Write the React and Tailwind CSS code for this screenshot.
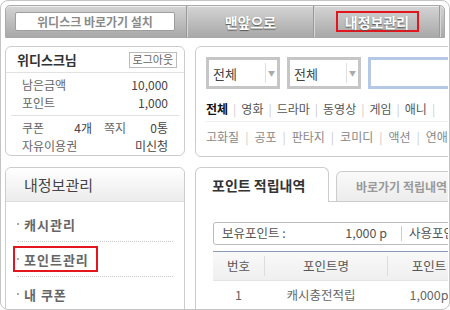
const font = { fontFamily: '"Noto Sans CJK KR", "Noto Sans", sans-serif' };

function Sep() {
  return (
    <div className="flex h-full">
      <div className="w-px h-full bg-[#9a9a9a]" />
      <div className="w-px h-full bg-[#d6d6d6]" />
    </div>
  );
}

function TopBar() {
  return (
    <div className="h-[33px] shrink-0 flex items-center rounded-t-[5px] border border-[#a9a9a9] bg-gradient-to-b from-[#d4d4d4] to-[#a9a9a9] shadow-[inset_0_1px_0_#eeeeee]">
      <div className="w-[180px] h-full flex items-center pl-[9px]">
        <div className="w-[160px] h-[19px] bg-white border border-[#9e9e9e] rounded-[2px] flex items-center justify-center text-[12px] font-bold text-[#8a8a8a] leading-none">
          위디스크 바로가기 설치
        </div>
      </div>
      <Sep />
      <div className="w-[125px] h-full flex items-center justify-center text-[14px] font-bold text-white leading-none [text-shadow:0_1px_1px_#555]">
        맨앞으로
      </div>
      <Sep />
      <div className="w-[124px] h-full flex items-center justify-center">
        <div className="w-[83px] h-[21px] border-2 border-[#e3161e] flex items-center justify-center text-[14px] font-bold text-white leading-none [text-shadow:0_1px_1px_#555]">
          내정보관리
        </div>
      </div>
      <Sep />
    </div>
  );
}

function UserBox() {
  return (
    <div className="h-[111px] border border-[#cccccc] rounded-[6px] flex flex-col text-[12px] leading-none">
      <div className="h-[26px] flex items-center justify-between pl-[11px] pr-[7px] border-b border-[#e2e2e2]">
        <span className="text-[13px] font-bold text-[#333]">위디스크님</span>
        <span className="h-[16px] px-[3px] border border-[#bbbbbb] text-[11px] text-[#666] flex items-center">로그아웃</span>
      </div>
      <div className="flex flex-col px-[16px] pr-[16px] pt-[3px]">
        <div className="h-[18px] flex items-center justify-between text-[#666]">
          <span>남은금액</span>
          <span className="text-[#444]">10,000</span>
        </div>
        <div className="h-[18px] flex items-center justify-between text-[#666]">
          <span>포인트</span>
          <span className="text-[#444]">1,000</span>
        </div>
      </div>
      <div className="mx-[5px] mt-[3px] border-t border-[#e2e2e2]" />
      <div className="flex flex-col px-[16px] pt-[3px]">
        <div className="h-[18px] flex items-center text-[#666]">
          <span className="w-[49px]">쿠폰</span>
          <span className="w-[21px] text-right text-[#444]">4개</span>
          <span className="ml-[12px]">쪽지</span>
          <span className="flex-1 text-right text-[#444]">0통</span>
        </div>
        <div className="h-[18px] flex items-center justify-between text-[#666]">
          <span>자유이용권</span>
          <span className="text-[#444]">미신청</span>
        </div>
      </div>
    </div>
  );
}

function MenuItem({ label, boxed }) {
  return (
    <div className="h-[34px] flex items-center pl-[11px] relative">
      <span className="w-[2px] h-[2px] bg-[#aaaaaa] mr-[5px]" />
      <span className="text-[13px] font-bold text-[#666] tracking-[1px] leading-none">{label}</span>
      {boxed && (
        <div className="absolute left-[7px] top-[4px] w-[85px] h-[26px] border-2 border-[#e3161e]" />
      )}
    </div>
  );
}

function MenuBox() {
  return (
    <div className="flex-1 border border-[#cccccc] rounded-t-[6px] flex flex-col">
      <div className="h-[34px] shrink-0 flex items-center pl-[18px] bg-gradient-to-b from-white to-[#ececec] border-b border-[#dddddd] rounded-t-[6px]">
        <span className="text-[15px] text-[#444] leading-none">내정보관리</span>
      </div>
      <div className="flex flex-col pt-[5px]">
        <MenuItem label="캐시관리" />
        <div className="mx-[11px] border-t border-dotted border-[#cccccc]" />
        <MenuItem label="포인트관리" boxed />
        <div className="mx-[11px] border-t border-dotted border-[#cccccc]" />
        <MenuItem label="내 쿠폰" />
      </div>
    </div>
  );
}

function Select() {
  return (
    <div className="w-[74px] h-[32px] border-[3px] border-[#c6c6c6] bg-white flex items-center">
      <span className="flex-1 pl-[4px] text-[13px] text-[#444] leading-none">전체</span>
      <div className="w-px h-[20px] bg-[#e0e0e0]" />
      <span className="w-[11px] text-center text-[7px] text-[#aaa] leading-none">▼</span>
    </div>
  );
}

const cats1 = ["영화", "드라마", "동영상", "게임", "애니"];
const cats2 = ["고화질", "공포", "판타지", "코미디", "액션", "연애"];

function SearchBox() {
  return (
    <div className="h-[111px] shrink-0 w-[300px] border border-[#cccccc] rounded-tl-[6px] rounded-bl-[6px] pl-[10px] pt-[10px] flex flex-col">
      <div className="flex items-center gap-[7px]">
        <Select />
        <Select />
        <div className="w-[120px] h-[32px] border-[3px] border-[#b5c9e6] bg-white" />
      </div>
      <div className="flex items-center mt-[14px] text-[12px] leading-none text-[#555] whitespace-nowrap">
        <span className="font-bold text-[#111]">전체</span>
        {cats1.map((c) => (
          <span key={c} className="flex items-center">
            <span className="mx-[5px] text-[#cccccc]">|</span>
            <span>{c}</span>
          </span>
        ))}
        <span className="mx-[5px] text-[#cccccc]">|</span>
      </div>
      <div className="mt-[6px] border-t border-[#eeeeee]" />
      <div className="flex items-center mt-[9px] text-[12px] leading-none text-[#888] whitespace-nowrap">
        <span>고화질</span>
        {cats2.slice(1).map((c) => (
          <span key={c} className="flex items-center">
            <span className="mx-[6px] text-[#cccccc]">|</span>
            <span>{c}</span>
          </span>
        ))}
      </div>
    </div>
  );
}

function Tabs() {
  return (
    <div className="h-[35px] shrink-0 mt-[10px] flex items-end w-[300px] border-b border-[#cccccc]">
      <div className="w-[134px] h-[35px] -mb-px bg-white border border-b-0 border-[#cccccc] rounded-t-[6px] flex items-center pl-[16px]">
        <span className="text-[14px] font-bold text-[#333] leading-none">포인트 적립내역</span>
      </div>
      <div className="ml-[7px] w-[130px] h-[30px] bg-gradient-to-b from-[#fafafa] to-[#ececec] border border-b-0 border-[#cccccc] rounded-t-[6px] flex items-center pl-[19px]">
        <span className="text-[12px] font-bold text-[#999] leading-none whitespace-nowrap">바로가기 적립내역</span>
      </div>
    </div>
  );
}

function Content() {
  return (
    <div className="flex-1 border-l border-[#cccccc] pl-[17px] pt-[20px] flex flex-col w-[300px]">
      <div className="h-[23px] shrink-0 border border-[#bbbbbb] rounded-[3px] flex items-center text-[12.5px] leading-none text-[#555] whitespace-nowrap">
        <span className="pl-[8px] w-[173px]">보유포인트 :</span>
        <span className="w-[0px] flex justify-end">
          <span className="shrink-0">1,000 p</span>
        </span>
        <span className="w-[14px]" />
        <div className="w-px h-[15px] bg-[#cccccc]" />
        <span className="pl-[7px]">사용포인트</span>
      </div>
      <div className="mt-[6px] border-t border-[#8b9bb5] flex flex-col text-[12.5px] leading-none whitespace-nowrap">
        <div className="h-[28px] flex items-center bg-gradient-to-b from-[#f9f9f9] to-[#efefef] text-[#555]">
          <span className="w-[51px] text-center">번호</span>
          <div className="w-px h-[20px] bg-[#dddddd]" />
          <span className="w-[122px] text-center">포인트명</span>
          <div className="w-px h-[20px] bg-[#dddddd]" />
          <span className="w-[82px] text-center">포인트</span>
        </div>
        <div className="h-[30px] flex items-center text-[#666] border-t border-[#e5e5e5]">
          <span className="w-[51px] text-center">1</span>
          <span className="w-[112px] ml-[1px] text-center">캐시충전적립</span>
          <span className="w-[11px]" />
          <span className="w-[82px] text-center">1,000p</span>
        </div>
      </div>
    </div>
  );
}

export default function App() {
  return (
    <div className="w-[450px] h-[310px] bg-white" style={font}>
      <div className="w-full h-full border border-[#c4c4c4] rounded-[8px] overflow-hidden flex flex-col pt-[4px] px-[4px] bg-white">
        <TopBar />
        <div className="flex flex-1 min-h-0 mt-[8px] gap-[10px]">
          <div className="w-[180px] shrink-0 flex flex-col gap-[11px]">
            <UserBox />
            <MenuBox />
          </div>
          <div className="flex-1 min-w-0 flex flex-col overflow-hidden -mr-[3px]">
            <SearchBox />
            <Tabs />
            <Content />
          </div>
        </div>
      </div>
    </div>
  );
}
